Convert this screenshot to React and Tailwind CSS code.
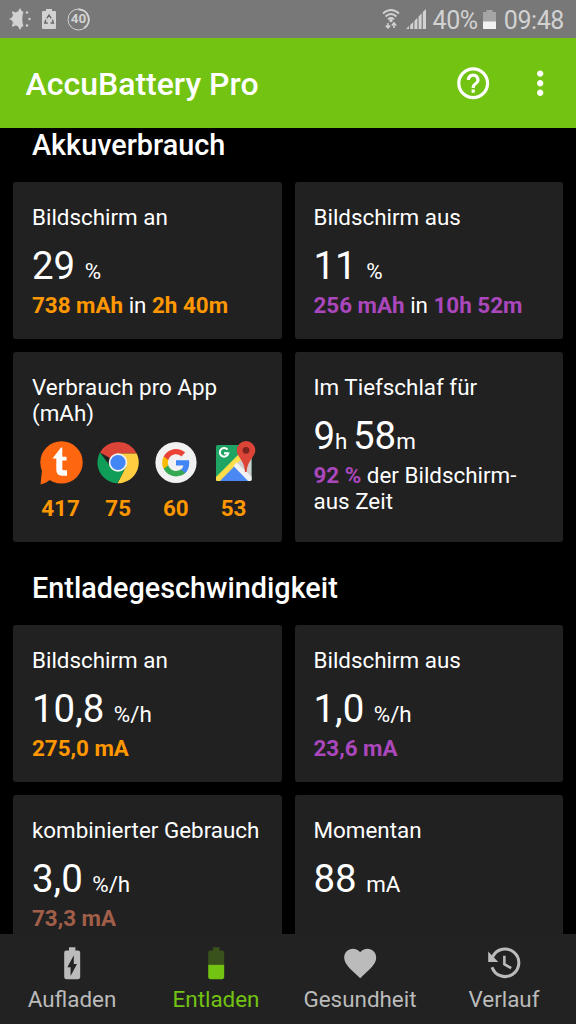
import React from 'react';

const TapatalkIcon = () => (
  <svg viewBox="0 0 44 46" className="w-[44px] h-[46px]">
    <circle cx="22.5" cy="22.4" r="21.2" fill="#ff6610" />
    <path d="M3 30 L1.500 44.500 Q8 43 13 38 Z" fill="#ff6610" />
    <path
      d="M13.500 18.500 L22 7.500 H23.300 V16.700 H27.500 V20.500 H23.300 V29 Q23.300 30.300 24.600 30.300 H28 V35.700 H23 Q17.300 35.700 17.300 30 V18.500 Z"
      fill="#fff"
    />
  </svg>
);

const ChromeIcon = () => (
  <svg viewBox="0 0 44 46" className="w-[44px] h-[46px]">
    <path d="M22 22.5 L4 12.5 A20.8 20.8 0 0 1 40.7 13.5 L22 13.5 Z" fill="#db4437" />
    <path d="M22 22.5 L22 13.5 H40.7 A20.8 20.8 0 0 1 21.5 43.3 L29.8 27 Z" fill="#ffcd40" />
    <path d="M4 12.5 A20.8 20.8 0 0 0 21.5 43.3 L29.8 27 L22 30 L14 26 Z" fill="#0f9d58" />
    <circle cx="22" cy="22.5" r="9.3" fill="#f1f1f1" />
    <circle cx="22" cy="22.5" r="7.6" fill="#4285f4" />
  </svg>
);

const GoogleIcon = () => (
  <svg viewBox="0 0 44 46" className="w-[44px] h-[46px]">
    <circle cx="22" cy="22.5" r="20.6" fill="#f1f1f1" />
    <g transform="translate(8.2 8.8) scale(1.15)">
      <path fill="#4285f4" d="M23.5 12.3c0-.8-.1-1.6-.2-2.3H12v4.6h6.5a5.6 5.6 0 0 1-2.4 3.6v3h3.9c2.2-2.1 3.5-5.200 3.500-8.900z" />
      <path fill="#34a853" d="M12 24c3.200 0 6-1.100 8-2.900l-3.900-3c-1.100.7-2.500 1.200-4.100 1.200-3.100 0-5.800-2.100-6.700-5H1.300v3.100A12 12 0 0 0 12 24z" />
      <path fill="#fbbc05" d="M5.300 14.300a7.200 7.200 0 0 1 0-4.600V6.600h-4a12 12 0 0 0 0 10.800z" />
      <path fill="#ea4335" d="M12 4.800c1.800 0 3.300.6 4.600 1.800L20 3.200A12 12 0 0 0 1.300 6.600l4 3.100C6.200 6.900 8.900 4.800 12 4.800z" />
    </g>
  </svg>
);

const MapsIcon = () => (
  <svg viewBox="0 0 44 46" className="w-[44px] h-[46px]">
    <defs>
      <clipPath id="map">
        <rect x="4" y="5" width="35.500" height="36" rx="1.500" />
      </clipPath>
    </defs>
    <g clipPath="url(#map)">
      <rect x="4" y="5" width="36" height="36" fill="#1fa463" />
      <path d="M22 23 L40 5 V41 Z" fill="#d0d0d0" />
      <path d="M4 42 L22 24 L40 42 Z" fill="#4a89f3" />
      <path d="M2 39 L30 11 L34 14.500 L6 43 Z" fill="#ffdd4b" />
      <path d="M21.500 26 L24.500 22.500 L42 39 L38 43 Z" fill="#f1f1f1" />
    </g>
    <path d="M15.500 9.700 A4.300 4.300 0 1 0 16.300 13.300 H12" fill="none" stroke="#fff" strokeWidth="2" />
    <path
      d="M34 1 A9.200 9.200 0 0 0 24.800 10.200 C24.800 17 32.500 20 33 32 H34.600 C35.200 20 43.300 17 43.300 10.200 A9.200 9.200 0 0 0 34 1 Z"
      fill="#db4437"
    />
    <circle cx="34" cy="10.300" r="3.400" fill="#7b231c" />
  </svg>
);

const apps = [
  { icon: TapatalkIcon, usage: 417 },
  { icon: ChromeIcon, usage: 75 },
  { icon: GoogleIcon, usage: 60 },
  { icon: MapsIcon, usage: 53 },
];

const navItems = [
  {
    label: 'Aufladen',
    path: (
      <path d="M15.670 4H14V2h-4v2H8.330C7.600 4 7 4.600 7 5.330v15.330C7 21.400 7.600 22 8.330 22h7.330c.74 0 1.340-.6 1.340-1.330V5.330C17 4.600 16.400 4 15.670 4zM11 20v-5.500H9L13 7v5.500h2L11 20z" />
    ),
  },
  {
    label: 'Entladen',
    active: true,
    path: (
      <>
        <path fillOpacity=".3" d="M17 5.330C17 4.600 16.400 4 15.670 4H14V2h-4v2H8.330C7.600 4 7 4.600 7 5.330V13h10V5.330z" />
        <path d="M7 13v7.670C7 21.400 7.600 22 8.330 22h7.330c.74 0 1.340-.6 1.340-1.330V13H7z" />
      </>
    ),
  },
  {
    label: 'Gesundheit',
    path: (
      <path d="M12 21.350l-1.450-1.320C5.400 15.360 2 12.280 2 8.500 2 5.420 4.420 3 7.500 3c1.740 0 3.410.81 4.500 2.090C13.090 3.810 14.760 3 16.500 3 19.580 3 22 5.420 22 8.500c0 3.780-3.400 6.860-8.550 11.540L12 21.350z" />
    ),
  },
  {
    label: 'Verlauf',
    path: (
      <>
        <path d="M4.800 8 A8.600 8.600 0 1 1 4.400 14.500" fill="none" stroke="currentColor" strokeWidth="1.900" />
        <path d="M2 4.700 L8.300 11.300 H2 Z" />
        <path d="M12.100 7.300 V12.600 L16.400 15.100" fill="none" stroke="currentColor" strokeWidth="1.600" />
      </>
    ),
  },
];

const StatusBar = () => (
  <div className="flex h-[38px] shrink-0 items-center justify-between bg-[#787878] pl-2 pr-3 text-[#d2d2d2]">
    <div className="flex items-center">
      <svg viewBox="0 0 24 24" className="h-6 w-6" fill="currentColor">
        <path d="M15.500 4.800 C9 3 4 7 4 12 C4 17 9 21 15.500 19.200 Q13 12 15.500 4.800 Z" />
        <path d="M12 1l2.200 4H9.800zM12 23l-2.200-4h4.400zM1 12l4-2v4zM3.800 4.200l4 1-3 3zM3.800 19.800l1-4 3 3z" />
        <circle cx="19" cy="5.500" r="1.200" />
        <circle cx="21.500" cy="12" r="1.200" />
        <circle cx="19" cy="18.500" r="1.200" />
      </svg>
      <svg viewBox="0 0 14 20" className="ml-[10px] h-5 w-[14px]" fill="currentColor">
        <path d="M4 0h6v2h3q1 0 1 1v16q0 1-1 1H1q-1 0-1-1V3q0-1 1-1h3z" />
        <path d="M4.800 9.300L7 6l2.200 3.300M10.400 10.700l1 3.300H8.500M5.800 14H2.800l1-3.300" fill="none" stroke="#6b6b6b" strokeWidth="1.500" />
      </svg>
      <div className="relative ml-[11px] flex h-[23px] w-[23px] items-center justify-center">
        <svg viewBox="0 0 23 23" className="absolute inset-0" fill="none" stroke="currentColor">
          <circle cx="11.500" cy="11.500" r="10.500" strokeWidth="1" />
          <path d="M11.500 1.500 A10 10 0 0 1 17 20" strokeWidth="2" />
        </svg>
        <span className="text-[13.500px] font-bold leading-none">40</span>
      </div>
    </div>
    <div className="flex items-center">
      <svg viewBox="0 0 18 20" className="h-5 w-[18px]" fill="none" stroke="currentColor" strokeWidth="1.800">
        <path d="M1 4.500 Q9-2.500 17 4.500M3.500 7.500 Q9 2.500 14.500 7.500M6 10.300 Q9 7.800 12 10.300" />
        <circle cx="9" cy="11.500" r=".8" fill="currentColor" />
        <path d="M6 14v5M3.800 16.500L6 19l2.200-2.500M12 19v-5M9.800 16.500L12 14l2.200 2.500" strokeWidth="1.500" />
      </svg>
      <svg viewBox="0 0 20 20" className="ml-[6px] h-5 w-5" fill="currentColor">
        <path d="M0 20l3-3v3zM4.200 16l3-3v7h-3zM8.400 12l3-3.200V20h-3zM12.600 7.500l3-3.200V20h-3zM16.800 3L20 0v20h-3.200z" />
      </svg>
      <span className="ml-[7px] mt-[2px] text-[25px] leading-none tracking-[-0.4px]">40%</span>
      <svg viewBox="0 0 13 19" className="ml-[5px] h-[19px] w-[13px]">
        <path d="M3.500 0h6v2H13v17H0V2h3.500z" fill="#a5a5a5" />
        <path d="M0 11.500h13V19H0z" fill="#f2f2f2" />
      </svg>
      <span className="ml-[8px] mt-[2px] text-[25px] leading-none tracking-[-0.4px]">09:48</span>
    </div>
  </div>
);

const Header = () => (
  <header className="flex h-[90px] shrink-0 items-center bg-[#72c312] pl-[25.500px] pr-[17px] text-white">
    <h1 className="flex-1 pt-[2px] text-[32px] font-medium leading-none">AccuBattery Pro</h1>
    <svg viewBox="0 0 24 24" className="h-[38.4px] w-[38.4px]" fill="currentColor">
      <path d="M11 18h2v-2h-2v2zm1-16C6.480 2 2 6.480 2 12s4.480 10 10 10 10-4.480 10-10S17.520 2 12 2zm0 18c-4.410 0-8-3.590-8-8s3.590-8 8-8 8 3.590 8 8-3.590 8-8 8zm0-14c-2.210 0-4 1.790-4 4h2c0-1.100.9-2 2-2s2 .9 2 2c0 2-3 1.750-3 5h2c0-2.250 3-2.500 3-5 0-2.210-1.790-4-4-4z" />
    </svg>
    <svg viewBox="0 0 24 24" className="ml-[28px] h-[38.4px] w-[38.4px]" fill="currentColor">
      <path d="M12 8c1.100 0 2-.9 2-2s-.9-2-2-2-2 .9-2 2 .9 2 2 2zm0 2c-1.100 0-2 .9-2 2s.9 2 2 2 2-.9 2-2-.9-2-2-2zm0 6c-1.100 0-2 .9-2 2s.9 2 2 2 2-.9 2-2-.9-2-2-2z" />
    </svg>
  </header>
);

const Card = ({ title, className = '', children }) => (
  <div className={`rounded-[3px] bg-[#212121] px-[19px] pt-[22px] text-[22.4px] leading-[26px] ${className}`}>
    <h3>{title}</h3>
    {children}
  </div>
);

const Value = ({ children }) => (
  <p className="mt-[13px] h-[49px] whitespace-pre text-[38.4px] leading-[46px]">{children}</p>
);

const Unit = ({ children }) => <span className="text-[22.4px]">{children}</span>;

const Orange = ({ children }) => <b className="font-bold text-[#ff9800]">{children}</b>;
const Purple = ({ children }) => <b className="font-bold text-[#ab47bc]">{children}</b>;

const SectionTitle = ({ children }) => (
  <h2 className="pl-[19px] text-[28.8px] font-medium leading-[34px]">{children}</h2>
);

const BottomNav = () => (
  <nav className="grid h-[90px] shrink-0 grid-cols-4 bg-[#222222]">
    {navItems.map((item) => (
      <div
        key={item.label}
        className={`flex flex-col items-center pt-[10px] ${item.active ? 'text-[#72c312]' : 'text-[#bbbbbb]'}`}
      >
        <svg viewBox="0 0 24 24" className="h-[38.4px] w-[38.4px]" fill="currentColor">
          {item.path}
        </svg>
        <span className="mt-[4px] text-[22.4px] leading-[26px]">{item.label}</span>
      </div>
    ))}
  </nav>
);

const App = () => (
  <div className="flex h-[1024px] w-[576px] flex-col overflow-hidden bg-black font-[Roboto,sans-serif] text-white">
    <StatusBar />
    <Header />

    <main className="min-h-0 flex-1 overflow-hidden px-[13px]">
      <SectionTitle>Akkuverbrauch</SectionTitle>
      <div className="mt-[20px] grid grid-cols-2 gap-[13px]">
        <Card title="Bildschirm an" className="h-[157px]">
          <Value>29 <Unit>%</Unit></Value>
          <p><Orange>738 mAh</Orange> in <Orange>2h 40m</Orange></p>
        </Card>
        <Card title="Bildschirm aus" className="h-[157px]">
          <Value>11 <Unit>%</Unit></Value>
          <p><Purple>256 mAh</Purple> in <Purple>10h 52m</Purple></p>
        </Card>
        <Card title="Verbrauch pro App (mAh)" className="h-[190px]">
          <div className="mt-[14px] flex gap-[13.700px] pl-[6.500px]">
            {apps.map(({ icon: Icon, usage }) => (
              <div key={usage} className="flex w-[44px] flex-col items-center">
                <Icon />
                <span className="mt-[9px] font-bold text-[#ff9800]">{usage}</span>
              </div>
            ))}
          </div>
        </Card>
        <Card title="Im Tiefschlaf für" className="h-[190px]">
          <Value>9<Unit>h </Unit>58<Unit>m</Unit></Value>
          <p><Purple>92 %</Purple> der Bildschirm-<br />aus Zeit</p>
        </Card>
      </div>

      <div className="mt-[29px]">
        <SectionTitle>Entladegeschwindigkeit</SectionTitle>
      </div>
      <div className="mt-[20px] grid grid-cols-2 gap-[13px]">
        <Card title="Bildschirm an" className="h-[157px]">
          <Value>10,8 <Unit>%/h</Unit></Value>
          <p><Orange>275,0 mA</Orange></p>
        </Card>
        <Card title="Bildschirm aus" className="h-[157px]">
          <Value>1,0 <Unit>%/h</Unit></Value>
          <p><Purple>23,6 mA</Purple></p>
        </Card>
        <Card title="kombinierter Gebrauch" className="h-[157px]">
          <Value>3,0 <Unit>%/h</Unit></Value>
          <p><b className="font-bold text-[#a15f49]">73,3 mA</b></p>
        </Card>
        <Card title="Momentan" className="h-[157px]">
          <Value>88 <Unit>mA</Unit></Value>
        </Card>
      </div>
    </main>

    <BottomNav />
  </div>
);

export default App;
